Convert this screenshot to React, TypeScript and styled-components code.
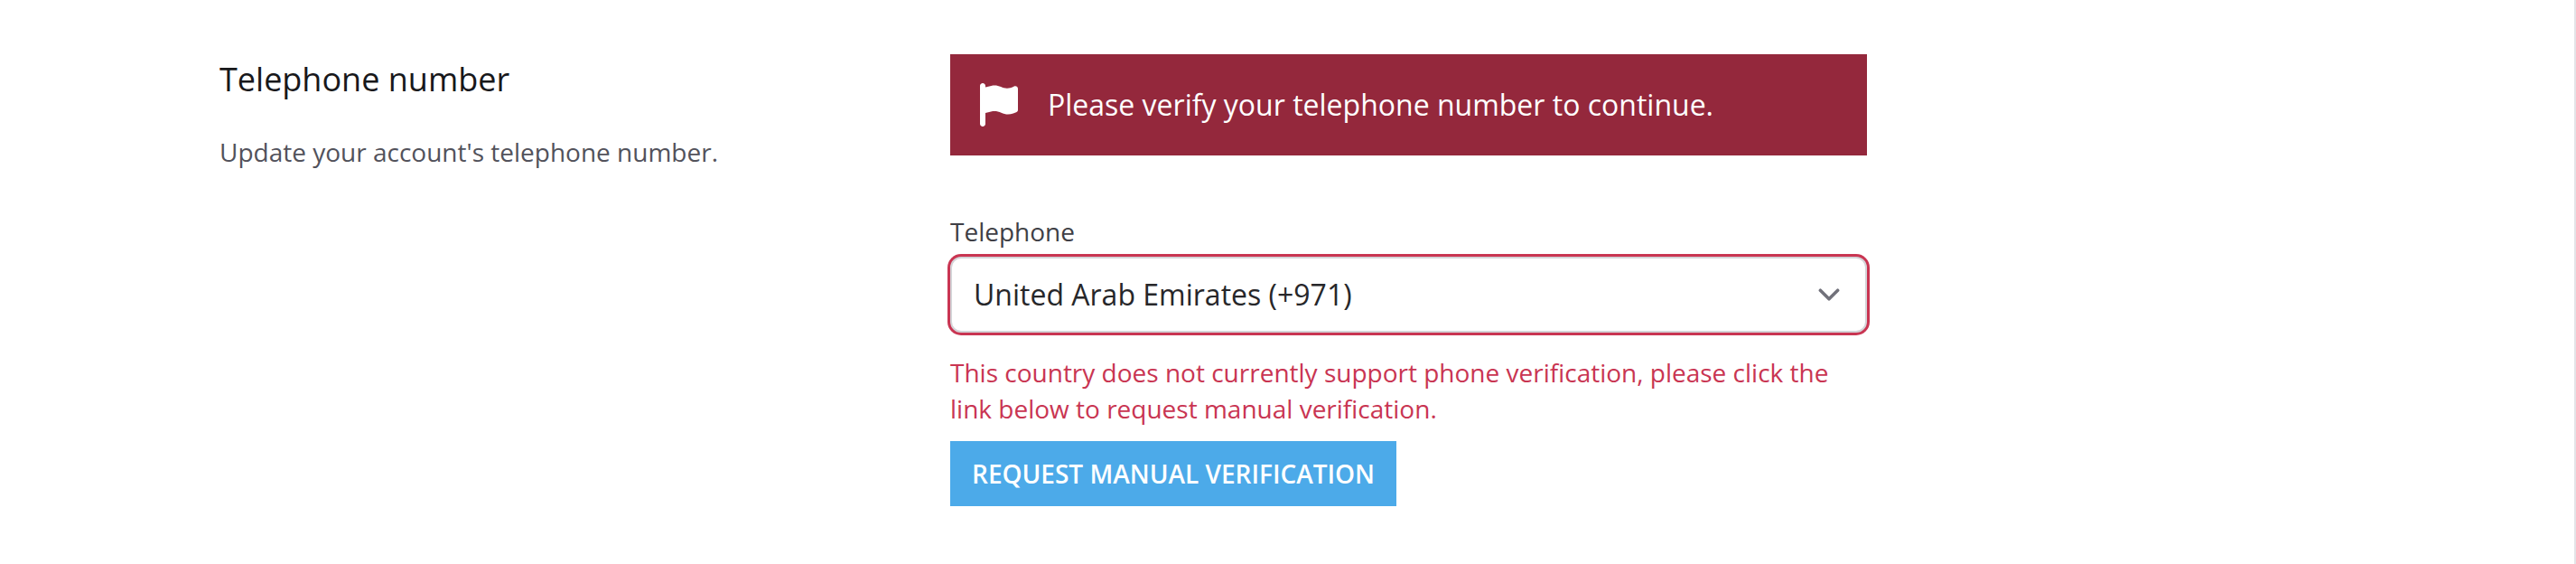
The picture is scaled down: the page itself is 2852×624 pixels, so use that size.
import React from "react";
import styled, { createGlobalStyle } from "styled-components";

const GlobalStyle = createGlobalStyle`
  * { box-sizing: border-box; }
  body { margin: 0; background: #fff; font-family: "Open Sans", sans-serif; }
`;
const Page = styled.main`
  min-height: 100vh;
  padding: 60px 243px;
  border-right: 2px solid #e4e4e7;
`;
const Section = styled.section`
  display: grid;
  grid-template-columns: minmax(0, 809fr) minmax(0, 1015fr);
  align-items: start;
  max-width: 1824px;
`;
const Title = styled.h2`
  margin: 4px 0 0;
  font-size: 36px;
  line-height: 48px;
  font-weight: 400;
  color: #18181b;
`;
const Intro = styled.p`
  margin: 36px 0 0;
  font-size: 28px;
  line-height: 40px;
  color: #52525b;
`;
const Form = styled.form`
  display: flex;
  flex-direction: column;
`;
const Alert = styled.div`
  display: flex;
  align-items: center;
  gap: 32px;
  padding: 32px;
  background: #94283c;
  color: #fff;
  font-size: 32px;
  line-height: 48px;
`;
const FlagIcon = styled.svg`
  flex: none;
  width: 44px;
  height: 48px;
  fill: currentColor;
`;
const Label = styled.label`
  margin-top: 64px;
  font-size: 28px;
  line-height: 40px;
  color: #3f3f46;
`;
const Field = styled.div`
  display: grid;
  align-items: center;
  margin-top: 8px;
`;
const Select = styled.select`
  grid-area: 1 / 1;
  appearance: none;
  width: 100%;
  padding: 16px 80px 16px 24px;
  border: 2px solid #d4d4d8;
  border-radius: 12px;
  box-shadow: 0 0 0 3px #c93552;
  background: #fff;
  font: 400 32px/48px "Open Sans", sans-serif;
  color: #27272a;
`;
const Chevron = styled.svg`
  grid-area: 1 / 1;
  justify-self: end;
  width: 48px;
  height: 48px;
  margin-right: 18px;
  fill: none;
  stroke: #71717a;
  stroke-width: 1.5;
  stroke-linecap: round;
  stroke-linejoin: round;
  pointer-events: none;
`;
const Message = styled.p`
  margin: 24px 0 0;
  font-size: 28px;
  line-height: 40px;
  color: #c93552;
`;
const Button = styled.button`
  align-self: flex-start;
  margin-top: 16px;
  padding: 16px 24px;
  border: 0;
  background: #4caae9;
  color: #fff;
  font: 600 28px/40px "Open Sans", sans-serif;
  text-transform: uppercase;
`;

export default function App() {
  return (
    <>
      <GlobalStyle />
      <Page>
        <Section>
          <header>
            <Title>Telephone number</Title>
            <Intro>Update your account's telephone number.</Intro>
          </header>
          <Form>
            <Alert role="alert">
              <FlagIcon viewBox="0 0 448 512" aria-hidden="true">
                <path d="M64 32C64 14.3 49.7 0 32 0S0 14.3 0 32v448c0 17.7 14.3 32 32 32s32-14.3 32-32V352l64.3-16.1c41.1-10.3 84.6-5.5 122.5 13.4 44.2 22.1 95.5 24.8 141.7 7.4l34.7-13c12.5-4.7 20.8-16.6 20.8-30V66.1c0-23-24.2-38-44.8-27.7l-9.6 4.8c-46.3 23.2-100.8 23.2-147.1 0-35.1-17.6-75.4-22-113.5-12.5L64 48V32z" />
              </FlagIcon>
              Please verify your telephone number to continue.
            </Alert>
            <Label htmlFor="telephone">Telephone</Label>
            <Field>
              <Select id="telephone" aria-invalid="true" aria-describedby="telephone-error">
                <option>United Arab Emirates (+971)</option>
              </Select>
              <Chevron viewBox="0 0 20 20" aria-hidden="true">
                <path d="M6 8l4 4 4-4" />
              </Chevron>
            </Field>
            <Message id="telephone-error">
              This country does not currently support phone verification, please click the link below to request manual verification.
            </Message>
            <Button type="button">Request manual verification</Button>
          </Form>
        </Section>
      </Page>
    </>
  );
}
